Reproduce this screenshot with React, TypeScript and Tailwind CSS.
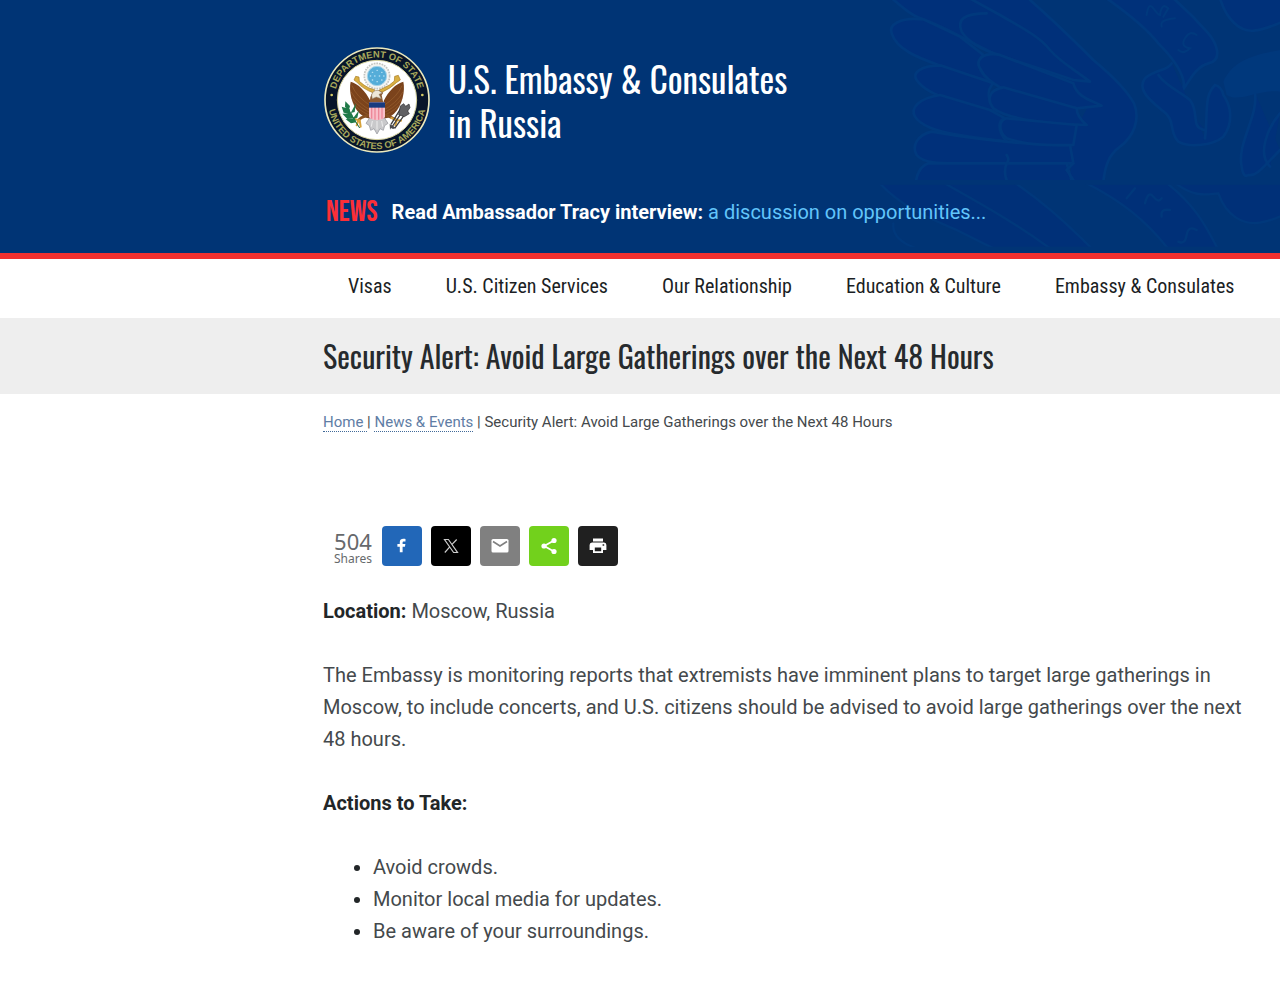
import React from "react";

const column = "pl-6 pr-6 lg:pl-[323px] lg:pr-8";
const condensed = "font-['Oswald','Roboto_Condensed',sans-serif]";

function Feathers() {
  return (
    <g fill="#00307a" stroke="#00397d" strokeWidth="8" strokeLinecap="round" strokeLinejoin="round">
      <path d="M90 -10C130 25 160 50 190 58C250 80 300 110 400 160L640 240L690 245C630 200 600 185 570 150C540 110 480 80 420 45L320 -10Z" />
      <path d="M190 58C120 50 85 75 95 100C110 150 180 175 235 195C290 215 340 230 390 245C350 210 350 180 370 165L300 110Z" />
      <path d="M420 165C370 155 345 180 360 205C375 235 400 250 420 262C500 285 570 305 650 325L725 317C690 300 650 290 640 250Z" />
      <path d="M380 40C310 40 290 60 305 95C320 120 360 150 420 165" fill="none" />
      <path d="M245 197C180 195 155 220 170 240C190 270 230 285 270 300C310 315 350 325 410 335C380 300 380 270 400 250Z" />
      <path d="M240 285C175 295 150 325 165 350C180 375 230 395 280 402C340 412 390 418 440 425C410 390 415 360 435 355L390 330Z" />
      <path d="M430 262C385 270 380 300 400 325C440 355 530 370 680 375C655 355 650 340 650 325Z" />
      <path d="M215 395C170 405 155 440 170 465C190 490 240 490 290 490L640 490L630 435C540 435 390 425 215 395Z" />
      <path d="M440 355C410 365 420 400 440 415C500 435 560 437 640 435L650 375Z" />
      <path d="M205 490C180 500 170 520 165 560H640L620 490Z" />
      <path d="M440 465Q450 480 440 490Q430 515 440 540M640 490L620 510L640 540" fill="none" />
    </g>
  );
}

function Watermark() {
  return (
    <svg aria-hidden="true" viewBox="0 0 1260 760" className="pointer-events-none absolute right-0 top-0 h-full w-[420px]" preserveAspectRatio="xMaxYMin slice">
      <defs>
        <clipPath id="tile"><path d="M0 0H1260V540H0Z" /></clipPath>
        <clipPath id="tile-repeat"><path d="M0 554H1260V740H0Z" /></clipPath>
      </defs>
      <g clipPath="url(#tile)">
        <path d="M330 0H510C580 60 640 120 700 180C760 230 800 270 822 310C842 360 820 410 780 440C745 465 735 500 730 545H630L640 400L690 310L620 240L540 140Z" fill="#00307a" />
        <Feathers />
        <g fill="#00317a" stroke="#00397d" strokeWidth="8" strokeLinecap="round">
          <path d="M510 0C590 70 650 130 700 180C760 230 800 270 822 310C842 360 820 410 780 440C745 465 735 500 730 545" fill="none" />
          <path d="M740 -5C810 45 860 85 895 130C930 165 960 200 970 240Q975 262 965 275C985 250 1005 200 1045 190C1090 180 1070 130 1045 100C1010 60 980 30 940 -5Z" />
          <path d="M935 190C920 215 890 205 855 235C830 270 870 300 905 330C950 360 925 395 955 425C990 445 1060 435 1090 410C1120 370 1115 320 1090 285Q1085 260 1065 255C1030 290 1045 340 1035 415M1035 390C990 385 1020 340 990 300C960 275 920 260 895 225" />
          <path d="M1080 -5C1100 60 1140 95 1180 92C1220 88 1240 75 1270 65V-5Z" />
          <path d="M1185 280C1195 350 1130 430 1145 500Q1150 535 1165 525C1190 530 1210 500 1260 450M1260 340C1225 380 1190 460 1230 500" />
          <path d="M860 45Q865 5 880 25T900 45Q905 5 925 25L910 50M905 80Q900 65 918 60T945 55M1010 105Q990 90 975 115T990 145Q970 165 955 150" fill="none" strokeWidth="6" />
        </g>
        <path d="M1090 245C1120 180 1180 165 1260 150V275C1200 265 1140 310 1100 285Z" fill="#00387c" />
      </g>
      <g clipPath="url(#tile-repeat)" fill="#003078" stroke="#00387b" strokeWidth="7" strokeLinecap="round">
        <path d="M55 545C120 620 220 660 290 690L430 760H710C600 650 540 600 460 545Z" />
        <path d="M245 545C360 610 470 670 590 760M100 670Q95 725 185 750" fill="none" />
        <path d="M670 545C780 600 860 660 935 760H1080C1035 670 1000 610 915 545Z" />
        <path d="M940 545C1010 600 1050 580 1075 580C1100 650 1150 675 1200 668Q1240 660 1270 645V545Z" />
        <path d="M800 595L825 565M855 610Q865 570 880 590T905 595M905 650Q900 625 930 630M1010 690Q985 675 980 705T955 725" fill="none" />
      </g>
    </svg>
  );
}

function Wing() {
  return (
    <g>
      <path d="M122 140C116 165 124 212 150 236C165 250 184 254 198 250L188 222L180 196C168 170 144 145 122 140Z" fill="#7b431c" />
      <path d="M126 152Q139 185 184 214M123 170Q141 205 188 229M127 191Q149 221 192 238M137 213Q158 235 194 246" fill="none" stroke="#9a602f" strokeWidth="2" />
    </g>
  );
}

function Seal() {
  return (
    <svg role="img" aria-label="Department of State seal" viewBox="42 36 318 318" className="size-[106px] shrink-0">
      <defs>
        <path id="upper-arc" d="M76 217A127 127 0 1 1 326 217" />
        <path id="lower-arc" d="M55 170A148 148 0 1 0 347 170" />
      </defs>
      <circle cx="201" cy="195" r="156" fill="#08152a" stroke="#ece9bd" strokeWidth="5" />
      <circle cx="201" cy="195" r="119" fill="#fff" stroke="#d6d29c" strokeWidth="3" />
      <g fill="#a9a95c" fontFamily="Liberation Sans, sans-serif" fontSize="28" fontWeight="700" textAnchor="middle">
        <text><textPath href="#upper-arc" startOffset="50%">DEPARTMENT OF STATE</textPath></text>
        <text><textPath href="#lower-arc" startOffset="50%">UNITED STATES OF AMERICA</textPath></text>
      </g>
      <circle cx="65" cy="180" r="4" fill="#d5cc67" />
      <circle cx="337" cy="180" r="4" fill="#d5cc67" />
      <circle cx="201" cy="123" r="38" fill="#f4f4f1" stroke="#c4c4c0" strokeWidth="5" strokeDasharray="5 3" />
      <circle cx="201" cy="123" r="29" fill="#55add8" stroke="#a5d3e9" strokeWidth="3" />
      <path d="M187 112h1M201 106h1M215 112h1M181 123h1M194 123h1M208 123h1M221 123h1M187 135h1M201 140h1M215 135h1" stroke="#b5e0f3" strokeWidth="4" strokeLinecap="round" />
      <Wing />
      <g transform="translate(402 0) scale(-1 1)"><Wing /></g>
      <path d="M137 124L147 126L148 139Q161 151 177 159L194 164L191 174Q159 162 141 142L132 135ZM265 121L254 124L253 138Q240 151 221 159L206 166L211 174Q243 160 259 143L271 135Z" fill="#d9af42" stroke="#a67a26" strokeWidth="2" />
      <path d="M181 187Q187 164 207 166L220 173L215 181L220 204H179Z" fill="#8d5b32" />
      <path d="M185 181Q188 165 205 166L217 174L207 178L214 191L199 186L187 191Z" fill="#eee8d7" stroke="#8d826e" strokeWidth="1.5" />
      <path d="M178 250L168 265L178 272L182 286L192 281L201 297L210 281L220 286L224 272L234 265L224 250Z" fill="#c9c9cb" stroke="#909198" strokeWidth="2" />
      <path d="M187 258L184 275M201 258V284M215 258L218 275" stroke="#fff" strokeWidth="2" />
      <path d="M177 202H225V246Q221 254 201 256Q181 254 177 246Z" fill="#f8bfc9" />
      <path d="M185 216V251M195 216V254M206 216V254M216 216V251" stroke="#ed8798" strokeWidth="4" />
      <path d="M177 202H225V218H177Z" fill="#173b80" />
      <path d="M175 240L154 248L145 256M227 240L246 248L261 256" stroke="#875022" strokeWidth="8" fill="none" />
      <path d="M143 255l-11-4M145 256l-5 15M149 255l3 20M258 254l-14-5M260 257l-4 14M261 255l12 2" stroke="#d6a23a" strokeWidth="6" strokeLinecap="round" />
      <path d="M109 209Q123 242 149 279" stroke="#176639" strokeWidth="3" fill="none" />
      <path d="M106 199l14 14-3 12-12-9ZM95 215l24 7 2 14-20-3ZM138 205l-4 26-12 3ZM97 236l28-1 6 13-19 4ZM147 226l-5 22-14 3ZM107 253l27-4 5 13-16 3Z" fill="#207a48" />
      <path d="M246 276L285 218M254 280L293 226M243 268L276 214" stroke="#3c3c3d" strokeWidth="4" />
      <path d="M271 213l10-7 6 8 10-7 3 11-7 10 5 8-15 9-17-6Z" fill="#606063" stroke="#303033" strokeWidth="2" />
      <path d="M239 267l19 11-9 4-6-3-3 5Z" fill="#4b4b4e" />
    </svg>
  );
}

const navItems = ["Visas", "U.S. Citizen Services", "Our Relationship", "Education & Culture", "Embassy & Consulates"];

const shares = [
  { label: "Share on Facebook", color: "bg-[#2267b8]", icon: <path fill="#fff" d="M17.8 26.2V20.8H15.4V18H17.8V16.1C17.8 13.5 19.3 12.8 21.4 12.8C22.2 12.8 23 12.9 23.5 13V15.6H22C20.9 15.6 20.6 16.1 20.6 16.9V18H23.4L22.9 20.8H20.6V26.2Z" /> },
  { label: "Share on X", color: "bg-black", icon: <path fill="none" stroke="#ccc" strokeWidth="1.2" d="M13.5 13.5H17.4L26.5 26.5H22.6ZM13.8 26.5L19 20.7M20.8 18.7L25.7 13.5" /> },
  { label: "Share by email", color: "bg-[#808080]", icon: <><rect x="11.5" y="13" width="17" height="13.5" rx="1.6" fill="#fff" /><path d="M13 15.5L20 20L27 15.5" fill="none" stroke="#808080" strokeWidth="1.6" /></> },
  { label: "More sharing options", color: "bg-[#72d11c]", icon: <><path d="M25 14.5L15.2 20L25 25.5" fill="none" stroke="#fff" strokeWidth="1.8" /><g fill="#fff"><circle cx="25" cy="14.5" r="2.6" /><circle cx="15" cy="20" r="2.6" /><circle cx="25" cy="25.5" r="2.6" /></g></> },
  { label: "Print", color: "bg-[#202020]", icon: <><path fill="#fff" d="M15 12.5H25V15.5H15ZM14 16.5H26Q28.4 16.5 28.4 19V24H25V27H15V24H11.6V19Q11.6 16.5 14 16.5Z" /><path fill="#202020" d="M16.8 21.5H23.2V25.3H16.8ZM24.6 18.3H26.2V19.8H24.6Z" /></> },
];

export default function App() {
  return (
    <div className="min-h-screen bg-white font-['Roboto',sans-serif] text-[#44494c]">
      <header className={`${column} relative overflow-hidden border-b-[6px] border-[#f2302f] bg-[#003475] pb-[25px] pt-[47px] text-white`}>
        <Watermark />
        <div className="relative flex items-center gap-[18px] pl-px">
          <Seal />
          <p className={`${condensed} text-[35px] leading-[44px]`}>U.S. Embassy &amp; Consulates<br />in Russia</p>
        </div>
        <div className="relative mt-[43px] flex items-center gap-3.5 pl-[3px]">
          <span className="font-['Bebas_Neue','Roboto_Condensed',sans-serif] text-[30px] leading-8 text-[#fb2f37]">NEWS</span>
          <p className="text-xl leading-8"><strong className="font-bold">Read Ambassador Tracy interview:</strong> <a href="#interview" className="text-[#62c5fb]">a discussion on opportunities...</a></p>
        </div>
      </header>
      <nav aria-label="Main" className={`${column} pb-4 pt-[11px] font-['Roboto_Condensed',sans-serif] text-xl leading-8 text-[#1b1e24]`}>
        <div className="flex flex-wrap gap-x-[54px] lg:pl-[25px]">
          {navItems.map((item) => <a key={item} href="#menu">{item}</a>)}
        </div>
      </nav>
      <div className={`${column} bg-[#eeeeee] py-[18px]`}>
        <h1 className={`${condensed} text-[30px] leading-10 text-[#262a2d]`}>Security Alert: Avoid Large Gatherings over the Next 48 Hours</h1>
      </div>
      <main className={column}>
        <nav aria-label="Breadcrumb" className="pt-[18px] text-[15px] leading-5">
          <a href="#home" className="border-b border-dotted border-[#426a99] text-[#5f7da5]">Home </a>| <a href="#news" className="border-b border-dotted border-[#426a99] text-[#5f7da5]">News &amp; Events</a> | <span>Security Alert: Avoid Large Gatherings over the Next 48 Hours</span>
        </nav>
        <div className="mt-[94px] flex items-center gap-[9px] pl-[10px]">
          <p className="flex w-10 flex-col items-center pt-1 font-['Noto_Sans',sans-serif] text-[#66696c]">
            <span className="text-[22px] leading-[22px]">504</span>
            <span className="text-xs leading-[14px]">Shares</span>
          </p>
          {shares.map(({ label, color, icon }) => (
            <button key={label} type="button" aria-label={label} className={`${color} size-10 rounded-[4px]`}>
              <svg aria-hidden="true" viewBox="0 0 40 40" className="size-10">{icon}</svg>
            </button>
          ))}
        </div>
        <article className="mt-[29px] space-y-8 pb-10 text-xl leading-8">
          <p><strong className="text-[#222628]">Location:</strong> Moscow, Russia</p>
          <p>The Embassy is monitoring reports that extremists have imminent plans to target large gatherings in Moscow, to include concerts, and U.S. citizens should be advised to avoid large gatherings over the next 48 hours.</p>
          <h2 className="font-bold text-[#222628]">Actions to Take:</h2>
          <ul className="list-disc pl-[50px] marker:text-[#222628]">
            <li>Avoid crowds.</li>
            <li>Monitor local media for updates.</li>
            <li>Be aware of your surroundings.</li>
          </ul>
        </article>
      </main>
    </div>
  );
}
